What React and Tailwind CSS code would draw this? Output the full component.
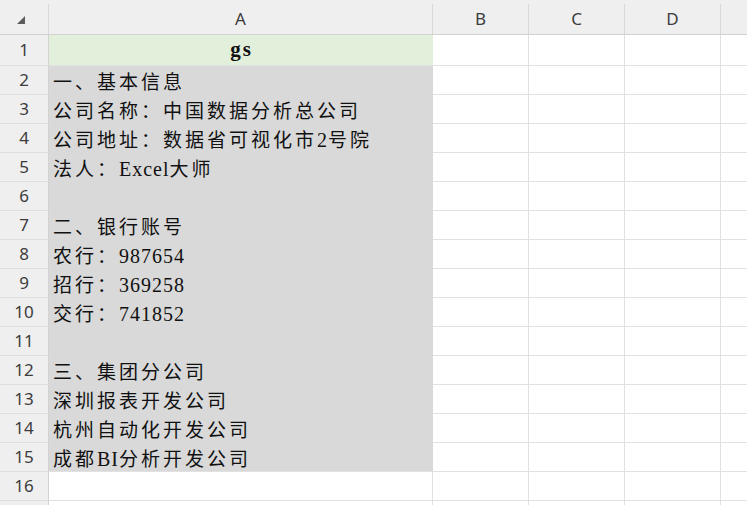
import React from 'react';

const rows = [
  { n: 1, text: 'gs', h: 'h-[31px]', fill: 'bg-[#e2efda]', title: true },
  { n: 2, text: '一、基本信息' },
  { n: 3, text: '公司名称：中国数据分析总公司' },
  { n: 4, text: '公司地址：数据省可视化市2号院' },
  { n: 5, text: '法人：Excel大师' },
  { n: 6, text: '' },
  { n: 7, text: '二、银行账号' },
  { n: 8, text: '农行：987654' },
  { n: 9, text: '招行：369258' },
  { n: 10, text: '交行：741852' },
  { n: 11, text: '' },
  { n: 12, text: '三、集团分公司' },
  { n: 13, text: '深圳报表开发公司' },
  { n: 14, text: '杭州自动化开发公司' },
  { n: 15, text: '成都BI分析开发公司' },
  { n: 16, text: '', white: true },
  { n: 17, text: '', white: true, hideNum: true },
];

// split mixed text so latin runs get the serif face
function Mixed({ text }) {
  const parts = text.match(/[A-Za-z0-9]+|[^A-Za-z0-9]+/g) || [];
  return parts.map((p, i) =>
    /[A-Za-z0-9]/.test(p) ? (
      <span key={i} className="font-['Liberation_Serif',serif] text-[20px] tracking-[1px]">
        {p}
      </span>
    ) : (
      <span key={i} className="font-['Noto_Sans_CJK_SC',sans-serif] text-[19px] tracking-[3px]">
        {p}
      </span>
    )
  );
}

function Corner() {
  return (
    <svg width="8" height="8" viewBox="0 0 8 8" className="mt-[2px] ml-[-6px]">
      <polygon points="8,0 8,8 0,8" fill="#5c5c5c" />
    </svg>
  );
}

export default function App() {
  const hdr = "font-['Noto_Sans','Open_Sans',sans-serif] text-[17px] text-[#3c3c3c]";
  return (
    <div className="w-[747px] h-[505px] overflow-hidden bg-white">
      {/* column header */}
      <div className={`flex h-[35px] items-end bg-[#efefef] border-b border-[#d2d2d2] ${hdr}`}>
        <div className="w-[49px] h-[30px] flex items-center justify-center border-r border-[#d8d8d8]">
          <Corner />
        </div>
        <div className="w-[384px] h-[30px] flex items-center justify-center border-r border-[#d8d8d8]">A</div>
        <div className="w-[96px] h-[30px] flex items-center justify-center border-r border-[#d8d8d8]">B</div>
        <div className="w-[96px] h-[30px] flex items-center justify-center border-r border-[#d8d8d8]">C</div>
        <div className="w-[96px] h-[30px] flex items-center justify-center border-r border-[#d8d8d8]">D</div>
        <div className="flex-1 h-[30px]" />
      </div>

      {rows.map((r) => {
        const fill = r.fill || (r.white ? 'bg-white' : 'bg-[#d9d9d9]');
        const lastGray = r.n === 15;
        const aBorder = r.white || r.title || lastGray ? 'border-b border-[#e1e1e1]' : 'border-b border-[#d9d9d9]';
        return (
          <div key={r.n} className={`flex ${r.h || 'h-[29px]'}`}>
            <div className={`w-[49px] flex items-center justify-center bg-[#efefef] border-r border-b border-r-[#d2d2d2] border-b-[#dedede] ${hdr}`}>
              {r.hideNum ? '' : r.n}
            </div>
            <div
              className={`w-[384px] flex items-center px-[4px] text-[#111] ${fill} ${aBorder} ${
                r.white ? 'border-r border-r-[#e1e1e1]' : ''
              } ${r.title ? 'justify-center border-r border-r-[#e2efda]' : ''} ${
                !r.white && !r.title ? 'border-r border-r-[#d9d9d9]' : ''
              }`}
            >
              {r.title ? (
                <span className="font-['Liberation_Serif',serif] font-bold text-[21px] tracking-[2px] pl-[2px]">{r.text}</span>
              ) : (
                <span className="whitespace-nowrap leading-none pt-[2px]">
                  <Mixed text={r.text} />
                </span>
              )}
            </div>
            <div className="w-[96px] border-r border-b border-[#e1e1e1]" />
            <div className="w-[96px] border-r border-b border-[#e1e1e1]" />
            <div className="w-[96px] border-r border-b border-[#e1e1e1]" />
            <div className="flex-1 border-b border-[#e1e1e1]" />
          </div>
        );
      })}
    </div>
  );
}
